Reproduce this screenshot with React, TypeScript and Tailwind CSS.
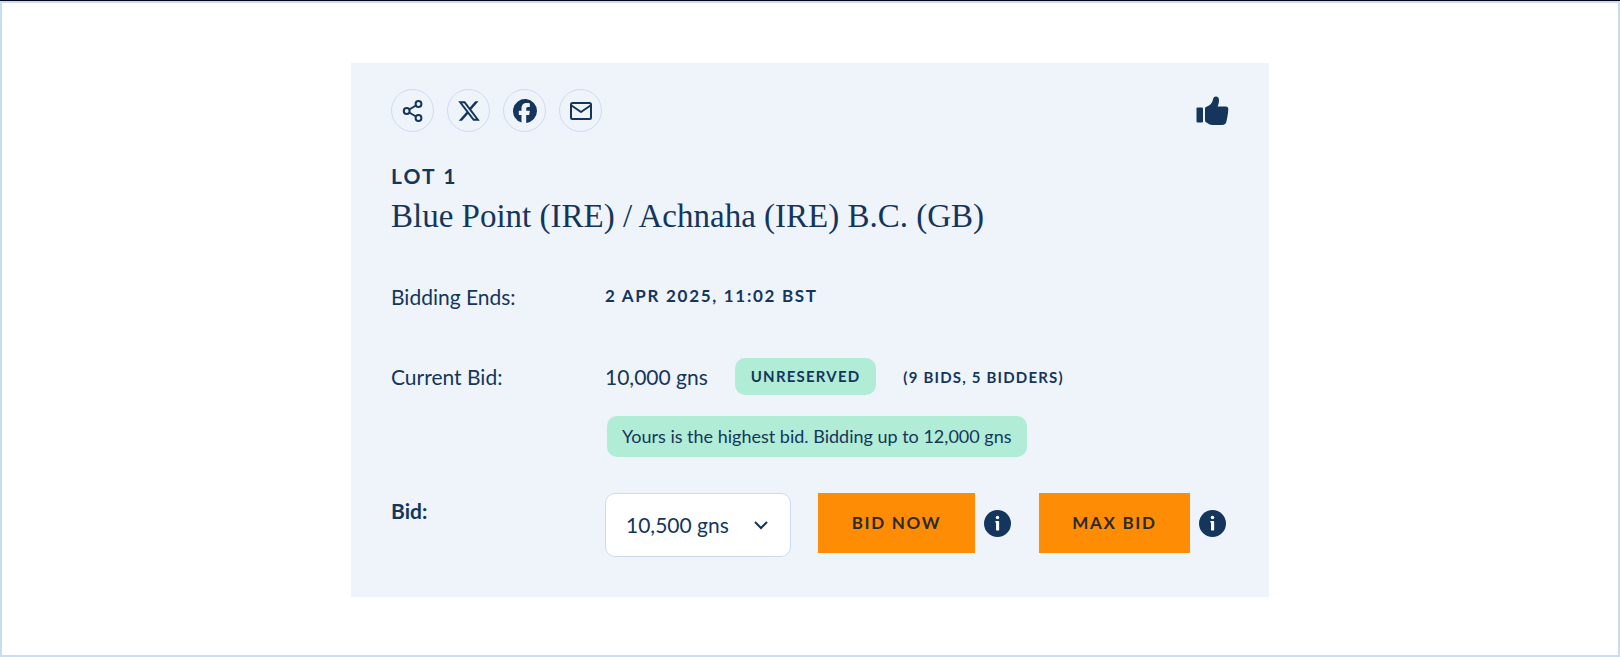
import type { ReactNode } from "react";

function ShareIcon() {
  return (
    <svg width="22" height="24" viewBox="0 0 22 24" fill="none" stroke="currentColor" strokeWidth="2" aria-hidden="true">
      <circle cx="4.700" cy="12" r="2.900" />
      <circle cx="16.500" cy="5" r="2.900" />
      <circle cx="16.500" cy="19" r="2.900" />
      <path d="M7.200 10.500 14 6.500M7.200 13.500 14 17.500" />
    </svg>
  );
}

function XIcon() {
  return (
    <svg width="24" height="24" viewBox="0 0 24 24" fill="currentColor" aria-hidden="true">
      <path d="M18.244 2.250h3.308l-7.227 8.260 8.502 11.240H16.170l-5.214-6.817L4.990 21.750H1.680l7.730-8.835L1.254 2.250H8.080l4.713 6.231zm-1.161 17.520h1.833L7.084 4.126H5.117z" />
    </svg>
  );
}

function FacebookIcon() {
  return (
    <svg width="24" height="24" viewBox="0 0 24 24" fill="currentColor" aria-hidden="true">
      <path d="M24 12a12 12 0 1 0-15.500 11.500V16H5.800V11.800h2.700V9.600c0-3.700 2-5.500 5.300-5.500 1.400 0 3 .3 3 .3v3.500h-1.700c-1.500 0-1.900.8-1.900 1.900v2h3.600l-.6 4.200h-3v7.900A12 12 0 0 0 24 12z" />
    </svg>
  );
}

function MailIcon() {
  return (
    <svg width="24" height="20" viewBox="0 0 24 20" fill="none" stroke="currentColor" strokeWidth="2" strokeLinejoin="round" aria-hidden="true">
      <rect x="2" y="2" width="20" height="16" rx="1.500" />
      <path d="M2.500 4.500 12 11l9.500-6.500" />
    </svg>
  );
}

function ThumbIcon() {
  return (
    <svg width="33" height="30" viewBox="1 0 33 30" fill="currentColor" aria-hidden="true">
      <rect x="1.500" y="11.500" width="6.500" height="15" rx="1" />
      <path d="M10 13c0-1.300.4-1.800 1.500-2.200 3.800-1.500 5.700-3.800 6.500-7.300C18.500 1.300 19.300.5 20.800.5c2.200 0 3.200 1.500 3.200 3.800 0 2.600-.7 4.500-1.400 6.200h8.200c1.700 0 2.600 1.100 2.500 2.800-.2 3.800-.9 8.200-1.800 12-.5 2.500-1.900 3.700-4.500 3.700h-9.500c-2.300 0-3.300-.5-4.800-1.700L11 26.200c-.7-.5-1-1-1-1.900z" />
    </svg>
  );
}

function InfoButton({ label }: { label: string }) {
  return (
    <button type="button" aria-label={label} className="shrink-0">
      <svg width="27" height="27" viewBox="0 0 26 26" aria-hidden="true">
        <circle cx="13" cy="13" r="13" fill="#14365d" />
        <circle cx="13" cy="7.300" r="1.700" fill="#fff" />
        <path d="M11.800 10.500h2c.4 0 .8.400.8.800v7.600c0 .5-.4.900-.9.900h-1.200c-.5 0-.9-.4-.9-.9v-6.600c-.5 0-.8-.4-.8-.9s.4-.9 1-.9z" fill="#fff" />
      </svg>
    </button>
  );
}

function SocialLink({ label, children }: { label: string; children: ReactNode }) {
  return (
    <a href="#" aria-label={label} className="flex size-[43px] items-center justify-center rounded-full border border-[#cbdcf0]">
      {children}
    </a>
  );
}

const rowClass = "grid grid-cols-[214px_1fr]";
const bidButton = "h-[60px] bg-[#ff8c05] text-[17px] font-bold tracking-widest text-[#2b2b2b]";

export default function App() {
  return (
    <div className="flex min-h-screen border-t border-[#05051a] font-[Lato,sans-serif] text-[#14365d]">
      <main className="flex flex-1 items-center justify-center border-2 border-[#c9dcf1] bg-white pt-0.5">
        <section className="w-full max-w-[918px] bg-[#eff4fb] px-10 pt-[26px] pb-10">
          <header className="flex items-center justify-between">
            <nav aria-label="Share this lot" className="flex gap-[13px]">
              <SocialLink label="Share"><ShareIcon /></SocialLink>
              <SocialLink label="X"><XIcon /></SocialLink>
              <SocialLink label="Facebook"><FacebookIcon /></SocialLink>
              <SocialLink label="Email"><MailIcon /></SocialLink>
            </nav>
            <button type="button" aria-label="Like"><ThumbIcon /></button>
          </header>

          <p className="mt-[30px] text-[21px] leading-7 font-bold tracking-widest">LOT 1</p>
          <h1 className="mt-1.5 font-['Liberation_Serif',serif] text-[33px] leading-10">
            Blue Point (IRE) / Achnaha (IRE) B.C. (GB)
          </h1>

          <div className={`${rowClass} mt-[47px]`}>
            <span className="text-[21px] leading-7">Bidding Ends:</span>
            <time dateTime="2025-04-02T11:02+01:00" className="text-[17px] leading-[26px] font-bold tracking-widest">
              2 APR 2025, 11:02 BST
            </time>
          </div>

          <div className={`${rowClass} mt-[47px] items-center`}>
            <span className="text-[21px] leading-7">Current Bid:</span>
            <div className="flex items-center whitespace-nowrap">
              <span className="text-[21px] leading-7">10,000 gns</span>
              <span className="ml-[27px] rounded-[10px] bg-[#b0ecd6] px-4 py-2 text-[15px] leading-[21px] font-bold tracking-[0.08em]">
                UNRESERVED
              </span>
              <span className="ml-[27px] text-[15px] leading-5 font-bold tracking-[0.08em]">(9 BIDS, 5 BIDDERS)</span>
            </div>
          </div>

          <div className={`${rowClass} mt-[21px]`}>
            <p className="col-start-2 ml-0.5 w-fit rounded-[10px] bg-[#b0ecd6] px-[15px] py-2 text-lg leading-[25px]">
              Yours is the highest bid. Bidding up to 12,000 gns
            </p>
          </div>

          <div className={`${rowClass} mt-9`}>
            <label htmlFor="bid" className="mt-1 text-[21px] leading-7 font-bold">Bid:</label>
            <div className="flex">
              <div className="grid w-[186px] items-center">
                <select
                  id="bid"
                  className="col-start-1 row-start-1 h-16 w-full appearance-none rounded-[10px] border border-[#cbdcf0] bg-white pl-5 text-[21px]"
                >
                  <option>10,500 gns</option>
                </select>
                <svg width="16" height="10" viewBox="0 0 16 10" fill="none" stroke="currentColor" strokeWidth="2" className="pointer-events-none col-start-1 row-start-1 mr-[22px] justify-self-end" aria-hidden="true">
                  <path d="M2 2l6 6 6-6" />
                </svg>
              </div>
              <div className="ml-[27px] flex h-[60px] items-center">
                <button type="button" className={`${bidButton} w-[157px]`}>BID NOW</button>
                <div className="ml-[9px] flex"><InfoButton label="About bidding now" /></div>
              </div>
              <div className="ml-7 flex h-[60px] items-center">
                <button type="button" className={`${bidButton} w-[151px]`}>MAX BID</button>
                <div className="ml-[9px] flex"><InfoButton label="About maximum bids" /></div>
              </div>
            </div>
          </div>
        </section>
      </main>
    </div>
  );
}
